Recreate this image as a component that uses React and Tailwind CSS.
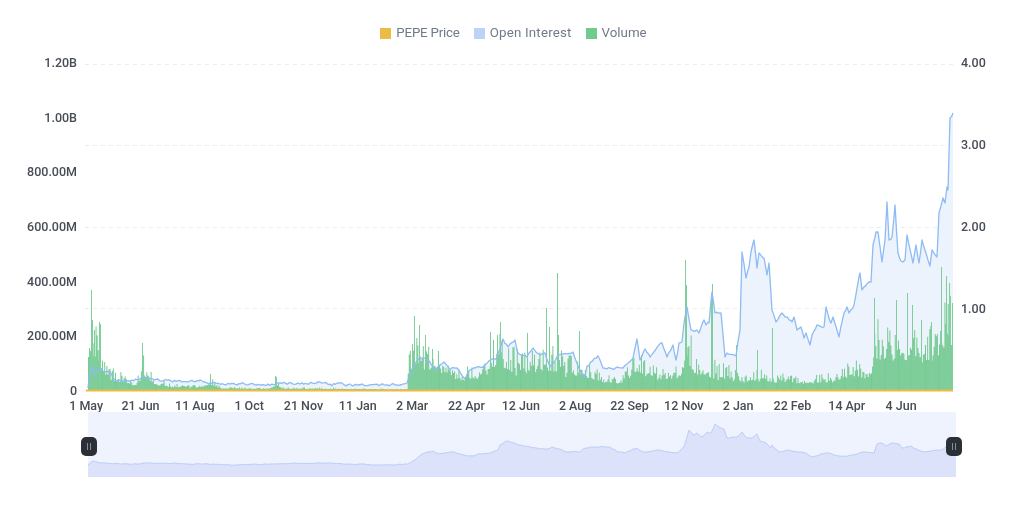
const oi = [[88,388],[90,372],[92,366],[95,376],[100,368],[105,372],[110,372],[115,380],[130,381],[143,376],[147,378],[160,381],[190,381],[200,380],[205,382],[210,383],[240,384],[268,384],[280,383],[300,384],[320,382],[330,384],[400,385],[407,383],[413,367],[420,358],[430,362],[435,370],[445,363],[450,370],[457,368],[465,379],[470,370],[483,367],[492,359],[497,358],[503,339],[508,347],[515,340],[518,353],[527,357],[533,348],[540,355],[545,353],[550,367],[558,355],[573,352],[580,370],[585,377],[587,366],[598,356],[603,368],[623,368],[633,358],[637,339],[640,360],[645,349],[650,357],[662,343],[667,357],[673,345],[676,360],[679,343],[682,342],[684,323],[687,307],[691,330],[697,330],[699,333],[704,320],[706,325],[709,323],[712,292],[715,313],[721,313],[725,357],[727,353],[736,356],[740,330],[742,252],[746,278],[749,267],[751,252],[754,240],[757,268],[759,253],[764,258],[767,275],[769,263],[772,310],[776,322],[782,313],[792,322],[794,317],[797,330],[801,327],[804,338],[806,333],[810,345],[812,335],[817,325],[824,327],[826,307],[831,323],[833,317],[839,337],[844,313],[847,307],[849,313],[854,305],[857,288],[860,273],[862,290],[869,282],[871,282],[873,245],[876,232],[878,232],[882,262],[885,240],[887,202],[889,240],[892,237],[895,205],[898,253],[901,261],[905,260],[907,235],[913,263],[916,245],[919,263],[922,240],[926,253],[930,266],[932,250],[937,257],[939,213],[943,198],[945,203],[947,187],[948,190],[950,118],[953,113]];

const nav = [[88,465],[93,461],[100,463],[120,464],[140,464],[143,463],[200,464],[240,465],[270,464],[320,463],[350,464],[395,465],[408,464],[415,460],[422,454],[428,452],[433,451],[437,453],[446,453],[452,452],[460,454],[467,456],[473,456],[478,454],[490,453],[495,451],[498,450],[500,445],[506,441],[510,442],[520,445],[530,447],[540,449],[548,449],[552,447],[560,449],[567,452],[580,452],[583,449],[590,447],[610,447],[618,452],[625,453],[633,449],[637,448],[643,452],[657,450],[677,453],[684,447],[689,430],[694,435],[697,433],[702,437],[707,432],[711,433],[715,424],[719,427],[724,429],[727,438],[732,437],[737,437],[742,432],[747,438],[752,438],[757,434],[760,441],[766,443],[771,448],[772,445],[779,452],[789,450],[797,452],[806,453],[812,457],[821,454],[829,453],[834,455],[844,456],[857,454],[862,452],[874,453],[877,444],[882,443],[886,446],[891,443],[899,444],[902,448],[911,446],[916,449],[924,452],[931,451],[941,450],[946,447],[956,447]];

const env = [[88,330],[96,330],[100,342],[110,366],[120,372],[135,384],[143,358],[150,370],[158,380],[170,384],[200,386],[210,376],[220,387],[270,388],[275,379],[282,387],[400,389],[407,389],[408,345],[420,335],[440,352],[460,372],[480,360],[490,342],[500,338],[520,352],[540,350],[560,352],[580,362],[600,372],[620,376],[640,355],[660,370],[680,362],[686,325],[695,356],[720,362],[745,368],[770,372],[800,378],[830,374],[850,362],[871,368],[873,318],[900,322],[920,328],[935,332],[941,298],[953,305]];

const spikes = [[91,290],[92,320],[94,330],[99,322],[100,324],[142,343],[143,358],[210,374],[275,376],[276,377],[414,316],[412,344],[419,325],[425,335],[432,349],[490,332],[500,322],[497,335],[527,333],[546,308],[549,327],[557,273],[558,335],[579,331],[685,260],[686,285],[712,284],[711,300],[772,328],[736,345],[757,350],[874,298],[896,300],[907,293],[912,305],[921,320],[931,322],[941,267],[946,276],[949,283],[952,303]];

const lerp = (pts, x) => {
  for (let i = 1; i < pts.length; i++) {
    if (x <= pts[i][0]) {
      const [a, b] = pts[i - 1];
      const [c, d] = pts[i];
      return b + ((d - b) * (x - a)) / (c - a || 1);
    }
  }
  return pts[pts.length - 1][1];
};

let seed = 12345;
const rnd = () => {
  seed = (seed * 1664525 + 1013904223) % 4294967296;
  return seed / 4294967296;
};

const wiggle = (pts, step, amp) => {
  const out = [];
  let n = 0;
  for (let i = 0; i < pts.length; i++) {
    out.push(pts[i]);
    const next = pts[i + 1];
    if (!next) break;
    for (let x = pts[i][0] + step; x < next[0] - step / 2; x += step) {
      n = n * 0.5 + (rnd() - 0.5) * amp;
      out.push([x, lerp(pts, x) + n]);
    }
  }
  return out;
};

const toLine = (pts) => pts.map(([x, y], i) => `${i ? "L" : "M"}${x.toFixed(1)} ${y.toFixed(1)}`).join("");

const oiLine = toLine(wiggle(oi, 1.8, 2.6));
const navLine = toLine(wiggle(nav, 2.5, 0.9));

let bars = "";
let burst = 0.5;
for (let x = 88; x <= 953; x += 1.08) {
  burst = burst * 0.8 + rnd() * 0.2;
  const r = rnd();
  const f = 0.2 + burst * 0.55 + Math.pow(r, 2.5) * 0.62;
  const h = (390 - lerp(env, x)) * f;
  bars += `M${x.toFixed(2)} ${(390 - h).toFixed(1)}h1V390h-1z`;
}
const spikePath = spikes.map(([x, y]) => `M${x} ${y}h1V390h-1z`).join("");

const leftLabels = ["1.20B", "1.00B", "800.00M", "600.00M", "400.00M", "200.00M", "0"];
const rightLabels = ["4.00", "3.00", "2.00", "1.00"];
const xLabels = ["1 May", "21 Jun", "11 Aug", "1 Oct", "21 Nov", "11 Jan", "2 Mar", "22 Apr", "12 Jun", "2 Aug", "22 Sep", "12 Nov", "2 Jan", "22 Feb", "14 Apr", "4 Jun"];

function LegendItem({ color, tracking, children }) {
  return (
    <div className="flex items-center gap-[5px]">
      <span className={`h-[11px] w-[11px] ${color}`} />
      <span className={`text-[13.3px] font-normal ${tracking}`}>{children}</span>
    </div>
  );
}

function Handle({ className }) {
  return (
    <div className={`absolute top-[25px] flex h-[19px] w-[16px] items-center justify-center gap-[2px] rounded-[5px] bg-[#2B2F36] ${className}`}>
      <span className="h-[7px] w-px bg-[#848E9C]" />
      <span className="h-[7px] w-px bg-[#848E9C]" />
    </div>
  );
}

export default function App() {
  return (
    <div className="h-[509px] w-[1024px] overflow-hidden bg-white font-['Roboto',sans-serif] text-[12.5px] leading-[16px] font-medium text-[#474D57] blur-[0.45px]">
      <div className="flex h-[55px] items-start justify-center gap-[14px] pt-[25px] pl-[3px] text-[#707A8A]">
        <LegendItem color="bg-[#EABC45]" tracking="tracking-[-0.2px]">PEPE Price</LegendItem>
        <LegendItem color="bg-[#BDD2F7]" tracking="tracking-[0.2px]">Open Interest</LegendItem>
        <LegendItem color="bg-[#72CB8E]" tracking="tracking-normal">Volume</LegendItem>
      </div>

      <div className="flex h-[344px]">
        <div className="flex w-[77px] shrink-0 flex-col justify-between text-right">
          {leftLabels.map((t) => (
            <div key={t}>{t}</div>
          ))}
        </div>
        <svg className="ml-[7px] h-[344px] w-[872px] shrink-0" viewBox="84 55 872 344">
          {[64, 145, 227, 308].map((y) => (
            <line key={y} x1="85" x2="953" y1={y + 0.5} y2={y + 0.5} stroke="#EAECEF" strokeDasharray="4 4" />
          ))}
          <path d={`${oiLine}L953 390L88 390Z`} fill="#EDF3FC" />
          <path d={bars} fill="#74CA91" />
          <path d={spikePath} fill="#7FCF9A" />
          <path d={oiLine} fill="none" stroke="#8DBBF3" strokeWidth="1.3" strokeLinejoin="round" />
          <rect x="86" y="389.5" width="867" height="2" fill="#EDBB3F" />
        </svg>
        <div className="ml-[5px] flex flex-col">
          {rightLabels.map((t) => (
            <div key={t} className="h-[82px]">{t}</div>
          ))}
        </div>
      </div>

      <div className="-mt-px ml-[59px] flex">
        {xLabels.map((t) => (
          <div key={t} className="w-[54.33px] shrink-0 text-center whitespace-nowrap">{t}</div>
        ))}
      </div>

      <div className="relative -mt-[2px] ml-[88px] h-[65px] w-[868px] bg-[#EEF3FD]">
        <svg className="h-full w-full" viewBox="88 412 868 65">
          <path d={`${navLine}L956 477L88 477Z`} fill="#DBE2FA" />
          <path d={navLine} fill="none" stroke="#BCCDF7" strokeWidth="1" />
        </svg>
        <Handle className="-left-[7px]" />
        <Handle className="-right-[6px]" />
      </div>
    </div>
  );
}
